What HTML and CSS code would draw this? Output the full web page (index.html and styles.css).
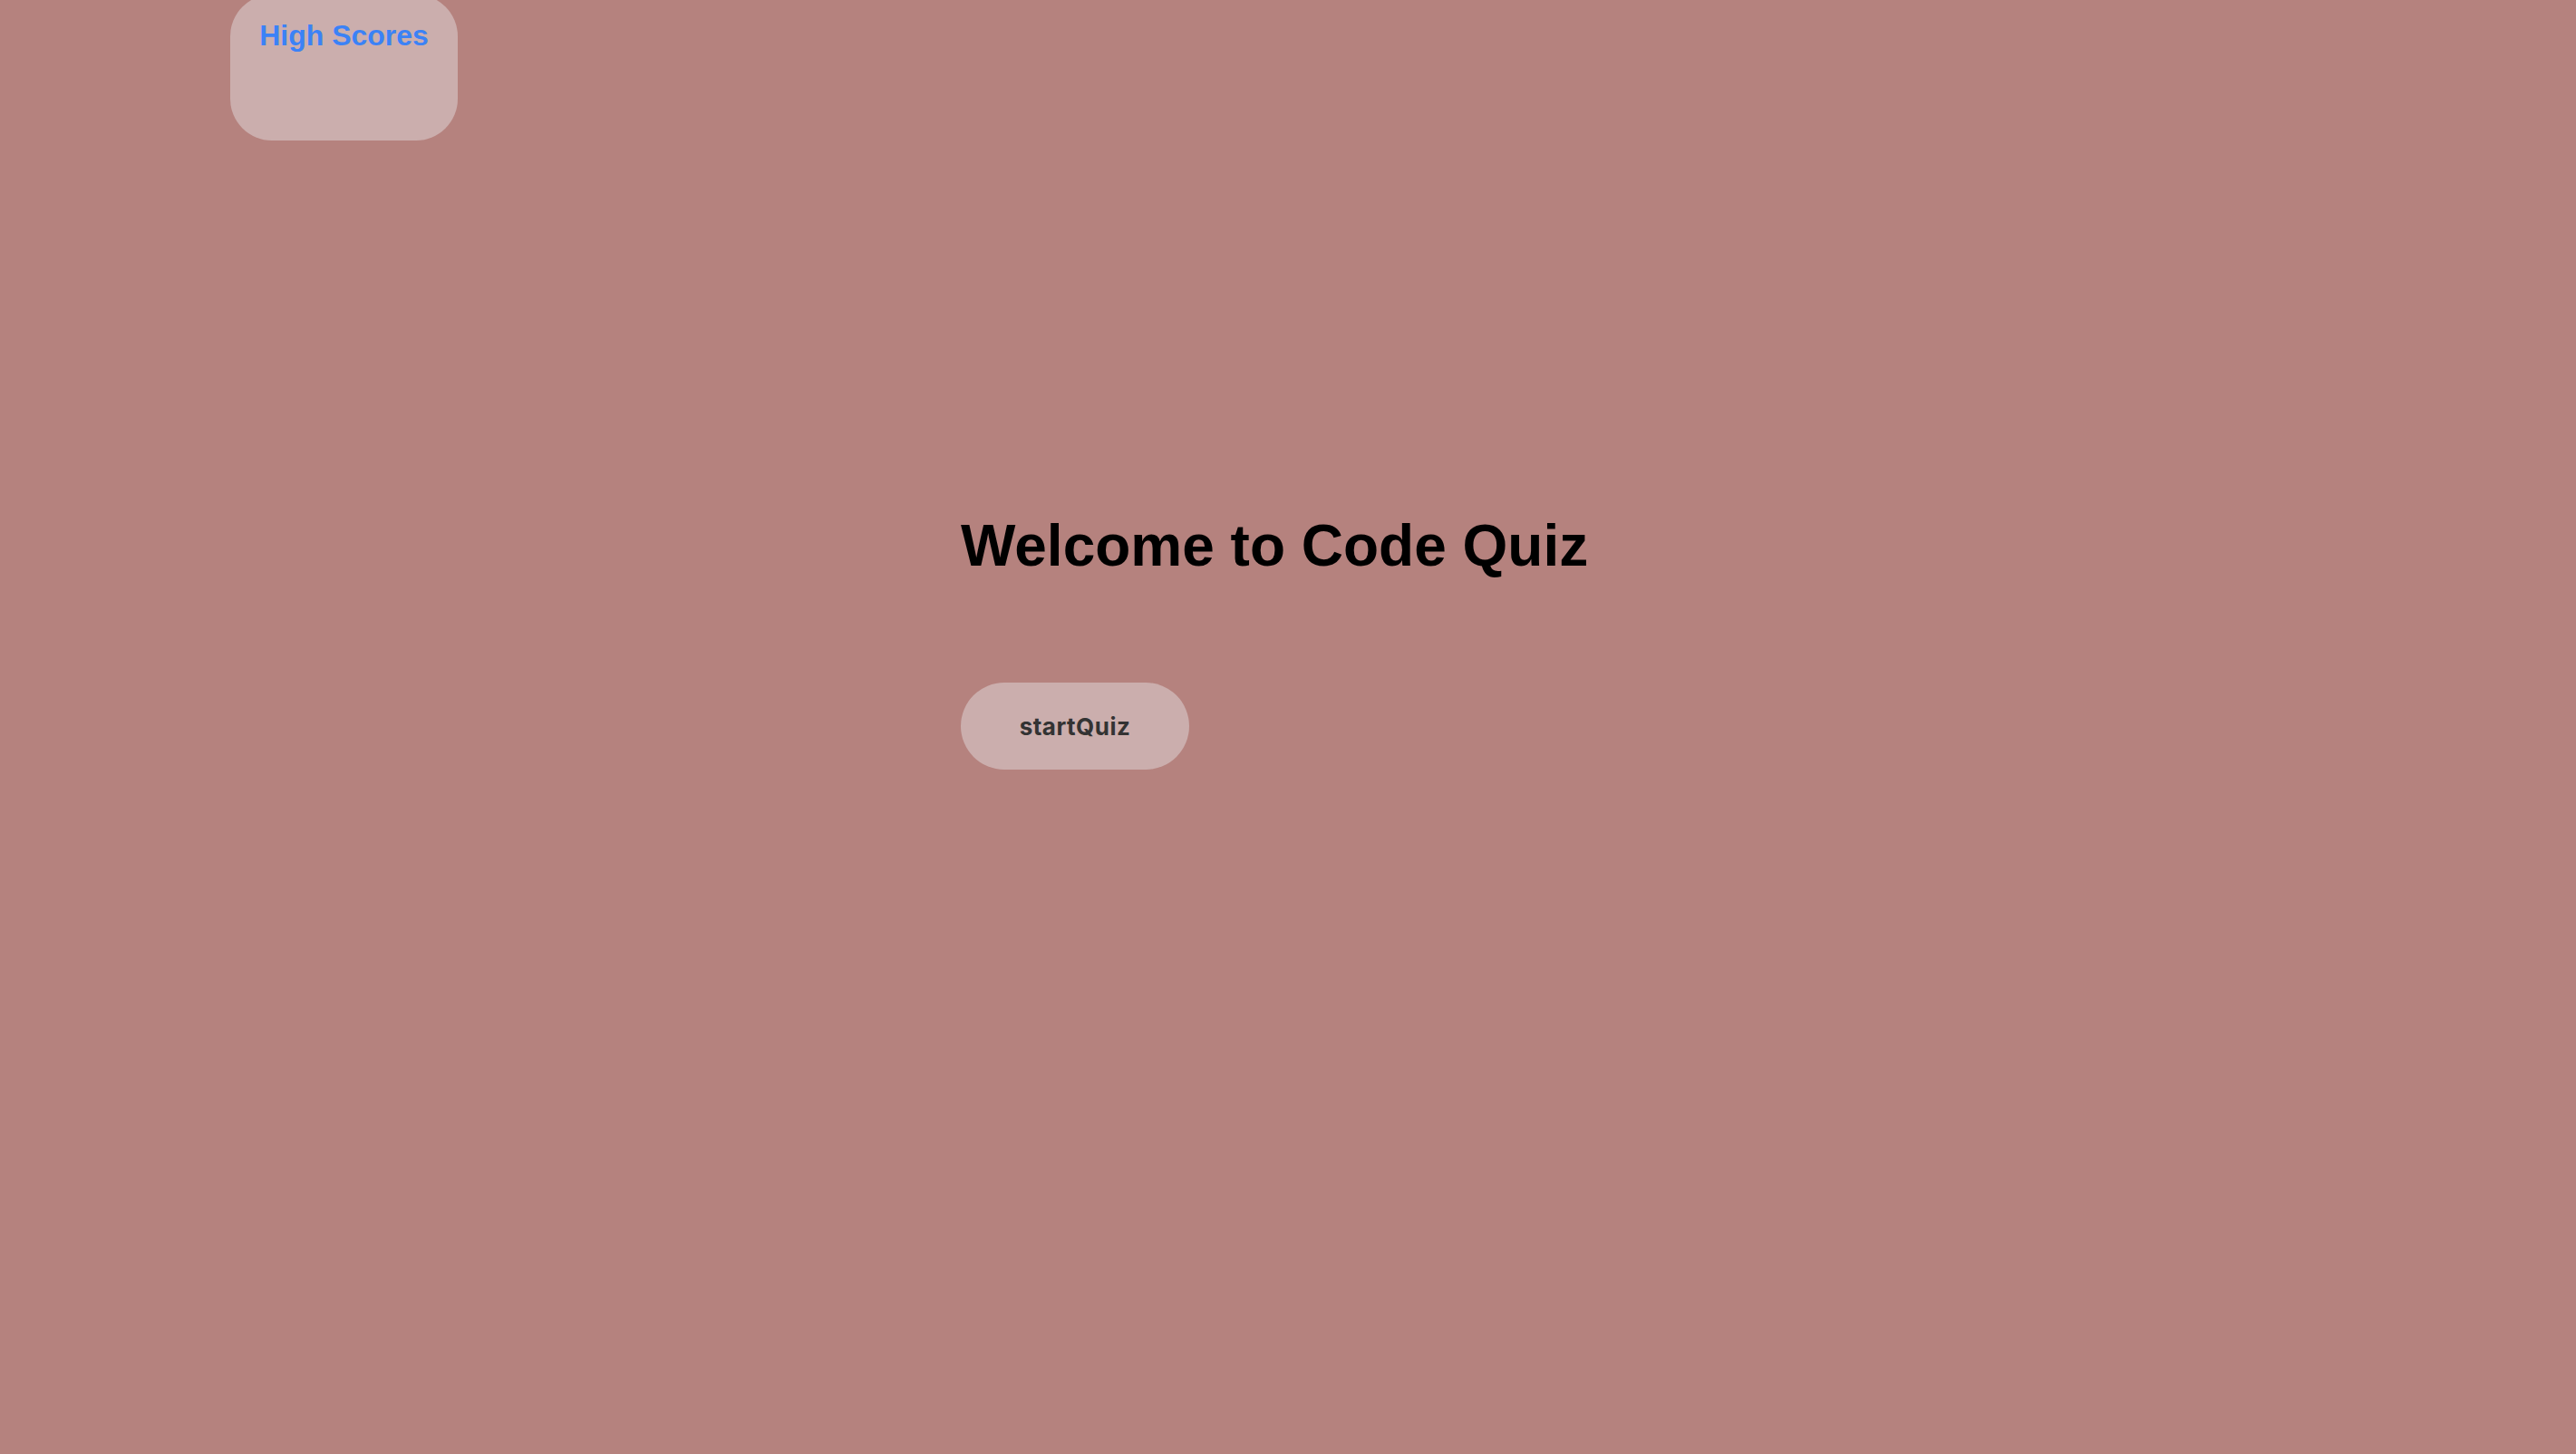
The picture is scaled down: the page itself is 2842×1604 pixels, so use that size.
FILE: index.html
```html
<!DOCTYPE html>
<html lang="en">
<head>
<meta charset="utf-8">
<title>Code Quiz</title>
<link rel="stylesheet" href="styles.css">
</head>
<body>
<header class="top-bar">
  <div class="scores-card">
    <a class="scores-link" href="#">High Scores</a>
  </div>
</header>
<main class="intro">
  <h1 class="intro-title">Welcome to Code Quiz</h1>
  <button class="start-btn" type="button">startQuiz</button>
</main>
</body>
</html>
```

FILE: styles.css
```css
html, body {
  margin: 0;
  padding: 0;
}

body {
  background: #b5827e;
  min-height: 1604px;
  font-family: "Liberation Sans", Arial, sans-serif;
}

.top-bar {
  display: flex;
  padding-left: 254px;
}

.scores-card {
  box-sizing: border-box;
  width: 251px;
  height: 161px;
  margin-top: -6px;
  padding-top: 27px;
  border-radius: 46px;
  background: #cbaead;
  text-align: center;
}

.scores-link {
  font-family: "Liberation Sans", Arial, sans-serif;
  font-weight: 700;
  font-size: 32px;
  color: #3b82f6;
  text-decoration: none;
}

.intro {
  width: 722px;
  margin: 410px auto 0;
  display: flex;
  flex-direction: column;
  align-items: flex-start;
  gap: 114px;
}

.intro-title {
  margin: 0;
  font-family: "Liberation Sans", Arial, sans-serif;
  font-weight: 700;
  font-size: 64px;
  color: #000;
}

.start-btn {
  box-sizing: border-box;
  width: 252px;
  height: 96px;
  padding: 0;
  border: none;
  border-radius: 48px;
  background: #cbaead;
  color: #333;
  font-family: Inter, "Noto Sans", sans-serif;
  font-weight: 700;
  font-size: 26px;
  letter-spacing: 0.5px;
  cursor: pointer;
}
```
